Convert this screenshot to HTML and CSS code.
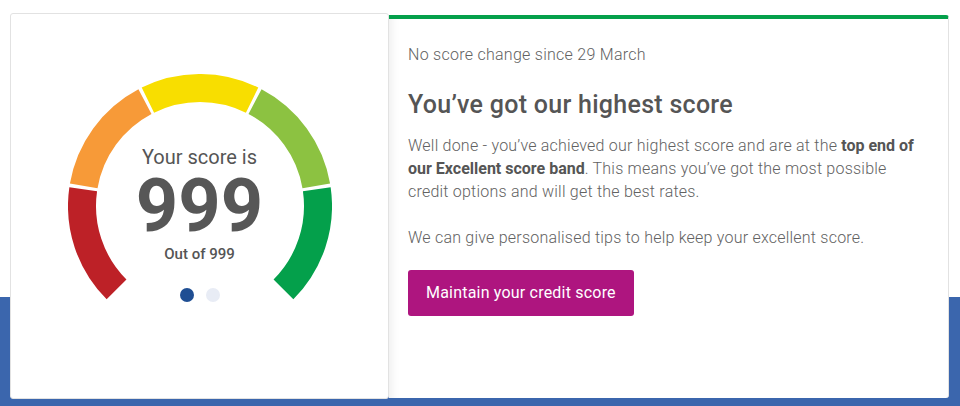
FILE: index.html
```html
<!DOCTYPE html>
<html lang="en">
<head>
    <meta charset="UTF-8">
    <meta name="viewport" content="width=device-width, initial-scale=1.0">
    <title>Your credit score</title>
    <link rel="stylesheet" href="styles.css">
</head>
<body>
    <div class="page">
        <div class="panel">
            <!-- score gauge -->
            <div class="score-card">
                <div class="gauge">
                    <svg class="gauge-arc" width="264" height="226" viewBox="0 0 264 226">
                        <g fill="none" stroke-width="28">
                            <path d="M48.56 215.44 A118 118 0 0 1 15.21 115.17" stroke="#bd2127"/>
                            <path d="M15.72 111.92 A118 118 0 0 1 76.97 27.62" stroke="#f79a38"/>
                            <path d="M79.90 26.12 A118 118 0 0 1 184.10 26.12" stroke="#f8de00"/>
                            <path d="M187.03 27.62 A118 118 0 0 1 248.28 111.92" stroke="#8cc241"/>
                            <path d="M248.79 115.17 A118 118 0 0 1 215.44 215.44" stroke="#04a04b"/>
                        </g>
                    </svg>
                    <div class="score">
                        <div class="score-label">Your score is</div>
                        <div class="score-value">999</div>
                        <div class="score-max">Out of 999</div>
                        <div class="dots">
                            <span class="dot active"></span>
                            <span class="dot"></span>
                        </div>
                    </div>
                </div>
            </div>

            <!-- score details -->
            <div class="info-card">
                <p class="change">No score change since 29 March</p>
                <h2>You’ve got our highest score</h2>
                <p>Well done - you’ve achieved our highest score and are at the <strong>top end of our Excellent score band</strong>. This means you’ve got the most possible credit options and will get the best rates.</p>
                <p>We can give personalised tips to help keep your excellent score.</p>
                <button type="button" class="btn">Maintain your credit score</button>
            </div>
        </div>
    </div>
</body>
</html>
```
FILE: styles.css
```css
body {
    margin: 0;
    font-family: Roboto, "Liberation Sans", Arial, sans-serif;
    overflow: hidden;
}
.page {
    height: 406px;
    box-sizing: border-box;
    padding: 13px 11px 0 10px;
    background: linear-gradient(#fff 0, #fff 297px, #3b66ad 297px);
}
.panel {
    display: flex;
    align-items: flex-start;
}

/* left card */
.score-card {
    position: relative;
    z-index: 1;
    width: 379px;
    height: 386px;
    box-sizing: border-box;
    padding-top: 60px;
    display: flex;
    flex-direction: column;
    align-items: center;
    background-color: #fff;
    border: 1px solid #e2e2e2;
    border-radius: 3px;
}
.gauge {
    position: relative;
    width: 264px;
    height: 226px;
}
.gauge-arc {
    display: block;
}
.score {
    position: absolute;
    top: 0;
    left: 0;
    right: 0;
    padding-top: 71px;
    display: flex;
    flex-direction: column;
    align-items: center;
    color: #555;
}
.score-label {
    font-size: 20px;
    line-height: 24px;
}
.score-value {
    font-size: 74px;
    line-height: 74px;
    font-weight: 700;
    color: #575757;
}
.score-max {
    margin-top: 1px;
    font-size: 15px;
    line-height: 20px;
    font-weight: 500;
}
.dots {
    display: flex;
    gap: 12px;
    margin-top: 24px;
}
.dot {
    width: 14px;
    height: 14px;
    border-radius: 50%;
    background-color: #e8ecf5;
}
.dot.active {
    background-color: #1f4e93;
}

/* right card */
.info-card {
    flex: 1;
    margin-top: 2px;
    height: 383px;
    box-sizing: border-box;
    padding: 24px 20px 0 19px;
    background-color: #fff;
    border-top: 4px solid #04a04b;
    border-right: 1px solid #e2e2e2;
    border-radius: 0 3px 3px 0;
    box-shadow: inset 12px 0 10px -10px rgba(0, 0, 0, 0.08);
    color: #626262;
    font-size: 16px;
    line-height: 23px;
    font-weight: 300;
    letter-spacing: 0.22px;
}
.info-card p {
    margin: 0 0 23px;
}
.info-card .change {
    margin-bottom: 24px;
    letter-spacing: 0.27px;
}
.info-card h2 {
    margin: 0 0 14px;
    font-size: 25px;
    line-height: 30px;
    font-weight: 500;
    letter-spacing: 0.28px;
    color: #555;
}
.info-card strong {
    font-weight: 700;
    color: #555;
    letter-spacing: 0;
}
.btn {
    margin-top: -2px;
    padding: 13px 18px;
    font-family: inherit;
    font-size: 16px;
    line-height: 20px;
    font-weight: 400;
    letter-spacing: 0.2px;
    color: #fff;
    background-color: #ae157f;
    border: none;
    border-radius: 3px;
    cursor: pointer;
}
.btn:hover {
    background-color: #94106b;
}
```
